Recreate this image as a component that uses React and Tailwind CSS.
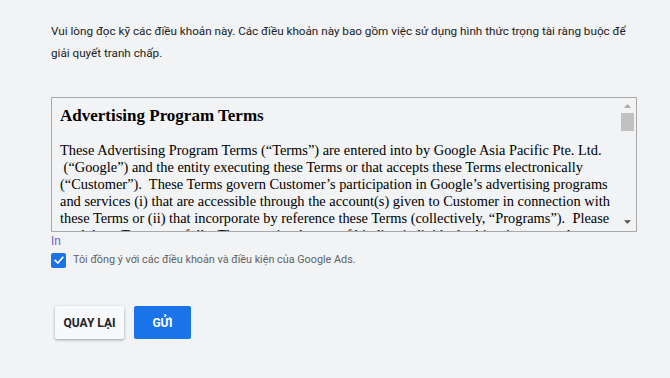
export default function App() {
  return (
    <div className="min-h-[378px] w-full bg-[#f1f3f4] pt-[20px] pl-[51px] pr-[30px]">
      <p className="text-[11.7px] leading-[22px] text-[#202124] font-['Roboto',sans-serif]">
        Vui lòng đọc kỹ các điều khoản này. Các điều khoản này bao gồm việc sử dụng hình thức trọng tài ràng buộc để giải quyết tranh chấp.
      </p>
      <div className="mt-[33px] flex h-[135px] w-[586px] border border-[#a9a9a9] bg-[#f1f3f4] text-[#000]">
        <div className="min-w-0 flex-1 overflow-hidden pl-[8px] font-['Liberation_Serif',serif]">
          <h3 className="mt-[8px] text-[17px] font-bold leading-[20px]">Advertising Program Terms</h3>
          <p className="mt-[16px] text-[14.4px] leading-[17px] whitespace-nowrap">
            These Advertising Program Terms (“Terms”) are entered into by Google Asia Pacific Pte. Ltd.<br />
            &nbsp;(“Google”) and the entity executing these Terms or that accepts these Terms electronically<br />
            (“Customer”).&nbsp; These Terms govern Customer’s participation in Google’s advertising programs<br />
            and services (i) that are accessible through the account(s) given to Customer in connection with<br />
            these Terms or (ii) that incorporate by reference these Terms (collectively, “Programs”).&nbsp; Please<br />
            read these Terms carefully. They require the use of binding individual arbitration to resolve<br />
            disputes rather than jury trials or class actions.
          </p>
        </div>
        <div className="flex w-[17px] shrink-0 flex-col items-center bg-[#f1f3f4]">
          <svg viewBox="0 0 8 4" className="mt-[6px] h-[4px] w-[7px]"><path d="M0 4 L4 0 L8 4 Z" fill="#a3a3a3" /></svg>
          <div className="mt-[5px] h-[18px] w-[13px] bg-[#c1c1c1]" />
          <div className="flex-1" />
          <svg viewBox="0 0 8 4" className="mb-[7px] h-[4px] w-[7px]"><path d="M0 0 L8 0 L4 4 Z" fill="#505050" /></svg>
        </div>
      </div>
      <a href="#" className="block mt-[1px] text-[12px] leading-[16px] text-[#6b5fd6] font-['Roboto',sans-serif]">In</a>
      <label className="mt-[3px] flex items-center gap-[7px] font-['Roboto',sans-serif]">
        <span className="flex h-[15px] w-[15px] items-center justify-center rounded-[2px] bg-[#1a73e8]">
          <svg viewBox="0 0 16 16" className="h-[12px] w-[12px]" fill="none" stroke="#fff" strokeWidth="2.2" strokeLinecap="square">
            <path d="M3 8.5 L6.5 12 L13 4.5" />
          </svg>
        </span>
        <span className="text-[10.8px] text-[#5f6368]">Tôi đồng ý với các điều khoản và điều kiện của Google Ads.</span>
      </label>
      <div className="mt-[38px] ml-[4px] flex gap-[10px] font-['Roboto',sans-serif]">
        <button className="h-[33px] w-[69px] rounded-[2px] bg-[#f8f9fa] text-[12px] font-bold text-[#202124] shadow-[0_1px_3px_rgba(0,0,0,0.35)]">QUAY LẠI</button>
        <button className="h-[33px] w-[57px] rounded-[2px] bg-[#1a73e8] text-[12px] font-bold text-white">GỬI</button>
      </div>
    </div>
  );
}
